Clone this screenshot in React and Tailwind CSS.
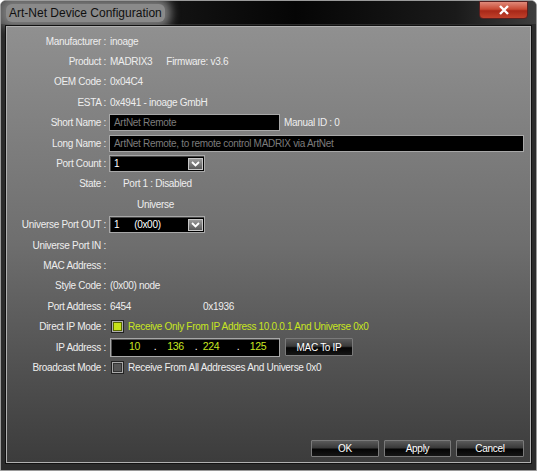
import React from "react";

const font = { fontFamily: '"Liberation Sans", Arial, sans-serif' };

const Label = ({ children }) => (
  <div className="w-[100px] shrink-0 text-right pr-[1px] text-[#eeeeee] whitespace-nowrap">{children} :</div>
);

const Row = ({ label, children }) => (
  <div className="flex items-center h-[20.4px]">
    {label !== undefined ? <Label>{label}</Label> : <div className="w-[100px] shrink-0" />}
    <div className="flex items-center ml-[3px] flex-1 min-w-0 whitespace-nowrap">{children}</div>
  </div>
);

const Chevron = () => (
  <div className="w-[15px] h-[12px] mr-[1px] bg-gradient-to-b from-[#9a9a9a] to-[#5a5a5a] border border-[#c8c8c8] flex items-center justify-center">
    <svg width="9" height="6" viewBox="0 0 9 6">
      <path d="M1 1 L4.5 4.5 L8 1" stroke="#ffffff" strokeWidth="1.8" fill="none" />
    </svg>
  </div>
);

const Select = ({ children }) => (
  <div className="w-[96px] h-[17px] bg-black border border-[#a8a8a8] shadow-[inset_1px_1px_0_#444] flex items-center justify-between text-white">
    <div className="pl-[4px] whitespace-pre">{children}</div>
    <Chevron />
  </div>
);

const Btn = ({ children, className = "" }) => (
  <div
    className={
      "h-[17px] border border-[#7a7a7a] rounded-[1px] bg-[linear-gradient(to_bottom,#5a5a5a_0%,#3a3a3a_45%,#050505_55%,#151515_100%)] text-white flex items-center justify-center " +
      className
    }
  >
    {children}
  </div>
);

export default function App() {
  return (
    <div
      style={font}
      className="w-[537px] h-[471px] bg-[#2b2b2b] border border-[#9a9a9a] rounded-t-[6px] flex flex-col text-[10px] tracking-[-0.3px] overflow-hidden"
    >
      {/* title bar */}
      <div className="h-[23px] shrink-0 flex items-center justify-between bg-[linear-gradient(to_right,#4a4a4a_0%,#1a1a1a_20%,#050505_55%,#1a1a1a_85%,#3e3e3e_100%)]">
        <span className="ml-[5px] px-[3px] text-[12px] tracking-normal text-[#101010] bg-[#8a8a8a] rounded-[6px] shadow-[0_0_10px_6px_#7a7a7a]">
          Art-Net Device Configuration
        </span>
        <div className="self-start mr-[8px] w-[49px] h-[18px] rounded-b-[4px] border border-[#5a2020] bg-[linear-gradient(to_bottom,#e08a7a_0%,#c84a34_45%,#a82818_55%,#c0402a_100%)] flex items-center justify-center">
          <svg width="12" height="10" viewBox="0 0 12 10">
            <path d="M2 1 L10 9 M10 1 L2 9" stroke="#ffffff" strokeWidth="2.4" />
          </svg>
        </div>
      </div>

      {/* content */}
      <div className="flex-1 mx-[4px] mb-[6px] mt-[1px] border border-[#111] flex">
        <div className="flex-1 border border-[#b0b0b0] bg-gradient-to-b from-[#909090] via-[#6e6e6e] to-[#3c3c3c] flex flex-col pt-[4px] text-[#eeeeee]">
          <Row label="Manufacturer">inoage</Row>
          <Row label="Product">
            <span>MADRIX3</span>
            <span className="ml-[14px]">Firmware: v3.6</span>
          </Row>
          <Row label="OEM Code">0x04C4</Row>
          <Row label="ESTA">0x4941 - inoage GmbH</Row>
          <Row label="Short Name">
            <div className="w-[171px] h-[17px] -ml-[1px] bg-black border border-[#a8a8a8] flex items-center pl-[4px] text-[#7c7c7c]">
              ArtNet Remote
            </div>
            <span className="ml-[4px]">Manual ID : 0</span>
          </Row>
          <Row label="Long Name">
            <div className="w-[415px] h-[17px] -ml-[1px] bg-black border border-[#a8a8a8] flex items-center pl-[4px] text-[#7c7c7c]">
              ArtNet Remote, to remote control MADRIX via ArtNet
            </div>
          </Row>
          <Row label="Port Count">
            <div className="-ml-[1px]">
              <Select>1</Select>
            </div>
          </Row>
          <Row label="State">
            <span className="ml-[13px]">Port 1 : Disabled</span>
          </Row>
          <Row>
            <span className="ml-[27px]">Universe</span>
          </Row>
          <Row label="Universe Port OUT">
            <div className="-ml-[1px]">
              <Select>{"1      (0x00)"}</Select>
            </div>
          </Row>
          <Row label="Universe Port IN" />
          <Row label="MAC Address" />
          <Row label="Style Code">(0x00) node</Row>
          <Row label="Port Address">
            <span className="w-[93px]">6454</span>
            <span>0x1936</span>
          </Row>
          <Row label="Direct IP Mode">
            <div className="w-[13px] h-[13px] ml-[1px] border border-[#222] bg-[#b0b0b0] p-[1px]">
              <div className="w-full h-full bg-[#c6e21a] border border-[#5a6a00]" />
            </div>
            <span className="ml-[4px] text-[#c8e620]">
              Receive Only From IP Address 10.0.0.1 And Universe 0x0
            </span>
          </Row>
          <Row label="IP Address">
            <div className="w-[170px] h-[19px] bg-black border border-[#a8a8a8] shadow-[inset_1px_1px_0_#555] flex items-center text-[#c8e620] text-[10.5px]">
              <span className="w-[29px] text-right">10</span>
              <span className="w-[11px]" />
              <span className="w-[8px] text-center text-white">.</span>
              <span className="w-[33px] text-center">136</span>
              <span className="w-[8px] text-center text-white">.</span>
              <span className="w-[22px] text-center">224</span>
              <span className="w-[12px]" />
              <span className="w-[8px] text-center text-white">.</span>
              <span className="w-[32px] text-center">125</span>
            </div>
            <Btn className="ml-[5px] w-[68px] h-[18px]">MAC To IP</Btn>
          </Row>
          <Row label="Broadcast Mode">
            <div className="w-[13px] h-[13px] ml-[1px] border border-[#222] bg-[#a8a8a8] p-[1px]">
              <div className="w-full h-full bg-[#555] border border-[#333]" />
            </div>
            <span className="ml-[4px]">Receive From All Addresses And Universe 0x0</span>
          </Row>

          <div className="flex-1" />
          <div className="flex justify-end gap-[5px] pr-[6px] pb-[5px]">
            <Btn className="w-[68px]">OK</Btn>
            <Btn className="w-[67px]">Apply</Btn>
            <Btn className="w-[68px]">Cancel</Btn>
          </div>
        </div>
      </div>
    </div>
  );
}
